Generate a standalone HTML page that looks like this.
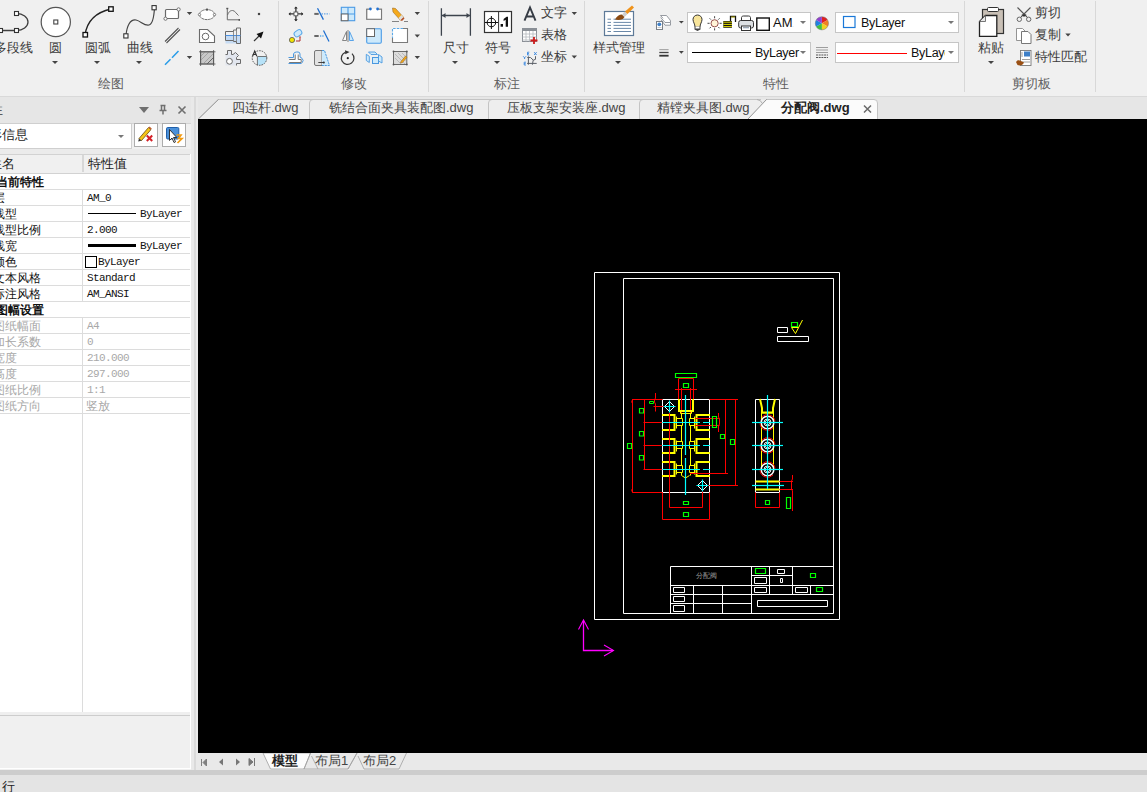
<!DOCTYPE html>
<html><head><meta charset="utf-8">
<style>
*{margin:0;padding:0;box-sizing:border-box}
html,body{width:1147px;height:792px;overflow:hidden;background:#f0f0f0;font-family:"Liberation Sans",sans-serif;}
.a{position:absolute}
.t{position:absolute;white-space:nowrap;font-size:13px;line-height:16px;color:#3b3b3b}
.g{position:absolute;white-space:nowrap;font-size:13px;line-height:16px;color:#5e5e5e}
.sep{position:absolute;top:1px;width:1px;height:91px;background:#d8d8d8}
.arr{position:absolute;width:0;height:0;border-left:3.5px solid transparent;border-right:3.5px solid transparent;border-top:3.5px solid #444}
.arrl{position:absolute;width:0;height:0;border-left:3px solid transparent;border-right:3px solid transparent;border-top:3.5px solid #777}
.box{position:absolute;background:#fff;border:1px solid #c6c6c6}
.row{position:absolute;left:0;width:190px;height:16px;border-bottom:1px solid #dcdcdc;background:#fff}
.pn{position:absolute;left:-7px;top:1px;font-size:12px;line-height:14px;color:#111;white-space:nowrap}
.pv{position:absolute;left:87px;top:1px;font-family:"Liberation Mono",monospace;font-size:11px;letter-spacing:-0.6px;line-height:14px;color:#111;white-space:nowrap}
.dis .pn,.dis .pv{color:#a8a8a8}
.cd{position:absolute;left:82px;top:0;width:1px;height:16px;background:#dcdcdc}
</style></head><body>
<!-- ribbon -->
<div class="a" style="left:0;top:0;width:1147px;height:96px;background:#f0f0f0"></div>
<div class="a" style="left:0;top:96px;width:1147px;height:1px;background:#d9d9d9"></div>
<div class="sep" style="left:278px"></div>
<div class="sep" style="left:428px"></div>
<div class="sep" style="left:584px"></div>
<div class="sep" style="left:964px"></div>
<div class="sep" style="left:1095px"></div>

<div class="box" style="left:687px;top:12px;width:124px;height:21px"></div>
<div class="box" style="left:687px;top:42px;width:124px;height:21px"></div>
<div class="box" style="left:835px;top:12px;width:124px;height:21px"></div>
<div class="box" style="left:835px;top:42px;width:124px;height:21px"></div>
<!-- icons --><svg class="a" style="left:0;top:0" width="1147" height="96"><path d="M0 30.5H16.5M16.5 13.5A11.5 8.5 0 0 1 16.5 30.5" stroke="#404040" stroke-width="1.3" fill="none"/><rect x="-1.5" y="28.5" width="4" height="4" fill="#fff" stroke="#333" stroke-width="1.1"/><rect x="14.5" y="28.5" width="4" height="4" fill="#fff" stroke="#333" stroke-width="1.1"/><rect x="14.5" y="11.5" width="4" height="4" fill="#fff" stroke="#333" stroke-width="1.1"/><circle cx="55.8" cy="22" r="14.6" fill="#fff" stroke="#555" stroke-width="1.2"/><rect x="53.8" y="20" width="4" height="4" fill="#fff" stroke="#444" stroke-width="1.1"/><path d="M85 35Q88 14 111 9" stroke="#222" stroke-width="1.3" fill="none"/><rect x="83" y="32.5" width="4.5" height="4.5" fill="#fff" stroke="#111" stroke-width="1.3"/><rect x="108.7" y="6.8" width="4.5" height="4.5" fill="#fff" stroke="#111" stroke-width="1.3"/><path d="M126 35C127 26 130 19 136 20C141 21 144 26 149 25C153 24 154 16 154.5 8" stroke="#444" stroke-width="1.2" fill="none"/><rect x="123.8" y="33.8" width="4.2" height="4.2" fill="#fff" stroke="#333" stroke-width="1.1"/><rect x="152" y="5.6" width="4.2" height="4.2" fill="#fff" stroke="#333" stroke-width="1.1"/><rect x="165.5" y="9.5" width="13" height="9" rx="1" fill="#fff" stroke="#6a6a6a" stroke-width="1.2"/><circle cx="165.5" cy="18.7" r="1.6" fill="#fff" stroke="#666" stroke-width="0.9"/><circle cx="178.6" cy="9.4" r="1.6" fill="#fff" stroke="#666" stroke-width="0.9"/><ellipse cx="207" cy="14.6" rx="7.6" ry="5" fill="#fff" stroke="#6a6a6a" stroke-width="1" stroke-dasharray="2.5 0.6"/><rect x="206" y="8.6" width="2" height="2" fill="#555"/><circle cx="199.5" cy="14.6" r="1.2" fill="#fff" stroke="#666" stroke-width="0.8"/><circle cx="214.5" cy="14.6" r="1.2" fill="#fff" stroke="#666" stroke-width="0.8"/><path d="M227.3 8.5V19.8H239.5M227.5 15C229 11 231 10.5 232.5 10.5C235 10.5 236.5 14 238.5 15.5" stroke="#6a6a6a" stroke-width="1" fill="none"/><rect x="226.3" y="7.8" width="2" height="1.4" fill="#555"/><rect x="238.5" y="19" width="1.5" height="1.8" fill="#555"/><rect x="257.9" y="12.9" width="2.2" height="2.2" fill="#444"/><path d="M186.8 12.0H192.2L189.5 15.0Z" fill="#444"/><path d="M186.8 56.0H192.2L189.5 59.0Z" fill="#444"/><path d="M414.6 12.0H420.0L417.3 15.0Z" fill="#444"/><path d="M414.6 34.5H420.0L417.3 37.5Z" fill="#444"/><path d="M414.6 56.0H420.0L417.3 59.0Z" fill="#444"/><path d="M571.5999999999999 12.0H577.0L574.3 15.0Z" fill="#444"/><path d="M571.5999999999999 55.5H577.0L574.3 58.5Z" fill="#444"/><path d="M1065.3 33.5H1070.7L1068 36.5Z" fill="#444"/><path d="M165 41.5L178.5 28M166.5 43L180 29.5" stroke="#555" stroke-width="1.1" fill="none"/><path d="M199.5 29.5H207.5L214.5 36V42.5H199.5Z" fill="#fff" stroke="#6a6a6a" stroke-width="1.1"/><circle cx="205.5" cy="36.5" r="3.3" fill="none" stroke="#6a6a6a" stroke-width="1"/><rect x="225.5" y="35.5" width="15" height="8" fill="#c5dbf4"/><path d="M225.5 31.5H233.5V30H236.5V28H240.5V43.5H236.5V41.5H233.5V40.5H225.5Z" fill="none" stroke="#6a6a6a" stroke-width="1"/><path d="M225.5 35.5H240.5" stroke="#4a90e2" stroke-width="1"/><path d="M236.5 30V41.5M233.5 30V40.5" stroke="#777" stroke-width="0.8"/><path d="M254 41L260 35" stroke="#333" stroke-width="1.2"/><path d="M263.5 31.5L256.5 34L261 38.5Z" fill="#111"/><path d="M165 64.8L170.5 59.2M172 57.8L178.5 51" stroke="#2a9de8" stroke-width="1.5"/><rect x="200.6" y="51.8" width="13" height="12.2" fill="#c8c8c8" stroke="#666" stroke-width="1"/><path d="M201 56L205 52M201 60L209 52M203 64L213 54M207 64L213 58" stroke="#999" stroke-width="0.8"/><path d="M199 51.8H215.5M199 64H215.5M200.6 50V66M213.6 50V66M207 64L214 57" stroke="#555" stroke-width="0.8"/><path d="M225.5 54.5H227.5V50.5H231.5V54.5H233L235.5 52.5L238.5 55.5L236.5 57.5V59.5H240.5V63.5H236.5V65.5H225.5Z" fill="#e2e6ee"/><path d="M225.5 54.5H227.5V50.5H231.5V54.5H233L235.5 52.5L238.5 55.5L236.5 57.5V59.5H240.5V63.5H236.5V65.5" fill="none" stroke="#6a6a6a" stroke-width="1"/><circle cx="229.5" cy="61.3" r="2.9" fill="#fff" stroke="#6a6a6a" stroke-width="1"/><clipPath id="cc"><circle cx="259.5" cy="58" r="7.3"/></clipPath><rect x="257.4" y="56.5" width="10" height="10" fill="#b7e2f8" clip-path="url(#cc)"/><circle cx="259.5" cy="58" r="7.3" fill="none" stroke="#444" stroke-width="0.9" stroke-dasharray="1.6 1"/><path d="M257.4 56.5H266.8M257.4 56.5V65.3" stroke="#555" stroke-width="0.8"/><path d="M252.6 56.3L254.7 51L256.8 56.3M253.4 54.5H256" stroke="#333" stroke-width="1.1" fill="none"/><path d="M295.9 7V21M289 13.9H303" stroke="#333" stroke-width="1.3"/><path d="M294 8.5L295.9 6.5L297.8 8.5ZM294 19.3L295.9 21.3L297.8 19.3ZM290.5 12L288.5 13.9L290.5 15.8ZM301.3 12L303.3 13.9L301.3 15.8Z" fill="#333"/><rect x="294" y="12" width="3.8" height="3.8" fill="#fff" stroke="#555" stroke-width="0.9"/><path d="M314.3 13.9H318.7" stroke="#666" stroke-width="2"/><path d="M321.5 13.9H329.5" stroke="#6aa8e8" stroke-width="1.4" stroke-dasharray="1.5 1"/><path d="M317.5 8.3L323.4 19.6" stroke="#1f6fd0" stroke-width="1.3"/><rect x="341.3" y="7.3" width="13.4" height="13.4" fill="#cde9fb" stroke="#4a9be6" stroke-width="1.1"/><path d="M348 7.3V20.7M341.3 14H354.7" stroke="#4a9be6" stroke-width="1.1"/><rect x="341.3" y="14" width="6.7" height="6.7" fill="#fff" stroke="#666" stroke-width="1"/><path d="M369.5 9.3H366.8V19.3H381.5V9.3H378.5" fill="#fff" stroke="#777" stroke-width="1.1"/><path d="M366.8 9.3V19.3H381.5V9.3" fill="#fff"/><rect x="367" y="9.5" width="14.3" height="9.6" fill="#fff"/><path d="M369.5 9.3H366.8V19.3H381.5V9.3H378.5" fill="none" stroke="#7a7a7a" stroke-width="1.1"/><circle cx="370.4" cy="9" r="1.4" fill="#1f6fd0"/><circle cx="377.6" cy="9" r="1.4" fill="#1f6fd0"/><path d="M392.5 8L393 12L400.5 20.3L403.5 17.2L395.5 8.5Z" fill="#f5a91a" stroke="#a06b20" stroke-width="0.6"/><path d="M398.5 18L401.5 15L403.5 17.2L400.5 20.3Z" fill="#e0e0e0"/><path d="M400.5 20.3L403.5 17.2L404.5 18.5L402 21Z" fill="#b5502a"/><path d="M392 21.5H399M404 21.5H408" stroke="#777" stroke-width="0.9"/><rect x="294" y="30.5" width="8" height="5.5" rx="2.5" transform="rotate(-35 298 33.3)" fill="#cde9fb" stroke="#5aa8e8" stroke-width="1"/><circle cx="292" cy="40" r="2.6" fill="#f2e400" stroke="#555" stroke-width="0.8"/><path d="M296 41H300V37.5" stroke="#b03030" stroke-width="1" fill="none"/><path d="M298.8 37.5L300 36L301.2 37.5Z" fill="#b03030"/><path d="M314.3 36H318.7" stroke="#666" stroke-width="2"/><path d="M320 36H324" stroke="#5aa8e8" stroke-width="1.4" stroke-dasharray="1.3 1"/><path d="M323.5 30.5L329 41.5" stroke="#1f6fd0" stroke-width="1.3"/><path d="M348 30V42" stroke="#aaa" stroke-width="1.6"/><path d="M346.5 31.5L342.5 40.5H346.5Z" fill="#fff" stroke="#777" stroke-width="0.9"/><path d="M349.5 31.5L353.5 40.5H349.5Z" fill="#cde9fb" stroke="#4a9be6" stroke-width="0.9"/><rect x="366.7" y="28.7" width="14.6" height="14.6" rx="1.2" fill="#cde9fb" stroke="#4a9be6" stroke-width="1.1"/><rect x="366.7" y="28.7" width="7.8" height="7.8" fill="#fff" stroke="#666" stroke-width="1"/><rect x="392.5" y="28.5" width="15" height="14" fill="#fff"/><path d="M392.5 38V42.5H407.5V28.5H403" fill="none" stroke="#7a7a7a" stroke-width="1.1"/><path d="M403 28.5H392.5V38" fill="none" stroke="#5aa8e8" stroke-width="1.1" stroke-dasharray="2.5 1.2"/><path d="M288.5 57.5H293.5V54Q294 52 296.5 52H298Q300 52 300 54V57L302 58.3Q304.2 60.5 302.2 62.6L301.3 63.5H288.5" fill="none" stroke="#4a98e0" stroke-width="1"/><path d="M289.2 59.5H295.2V54.5H298.2V59.5H301.2V62.5H289.2" fill="#fff" stroke="#fff" stroke-width="0.5"/><path d="M289.2 59.5H295.2V54.5M298.2 54.5V59.5H301.2V62.5M289.2 62.5H301.2" fill="none" stroke="#777" stroke-width="1"/><path d="M322 50.5H316Q314.5 50.5 314.5 52V64Q314.5 65.5 316 65.5H322Z" fill="#e2e2e2" stroke="#777" stroke-width="1"/><path d="M322 50.5H324.5L329.5 65.5H322Z" fill="#cdeafc"/><path d="M322 50.5H324.5L329.5 65.5H322" fill="none" stroke="#4a98e0" stroke-width="1" stroke-dasharray="2.2 0.8"/><path d="M318.3 62.5H323.5" stroke="#444" stroke-width="1"/><circle cx="323.8" cy="62.5" r="1.1" fill="#333"/><path d="M352 53.6A6.3 6.3 0 1 1 345.3 52.3" fill="none" stroke="#3a3a3a" stroke-width="1.3"/><path d="M345 50.2L349.6 52L345.3 54.2Z" fill="#333"/><circle cx="347.8" cy="58.2" r="1.1" fill="#222"/><path d="M368.5 52H375L377.5 54.5H371Z" fill="#cdeafc" stroke="#4a98e0" stroke-width="0.9"/><path d="M366.3 54.3L369.3 56.3V62.5L366.3 60.5Z" fill="#cdeafc" stroke="#4a98e0" stroke-width="0.9"/><rect x="372.5" y="57.5" width="6" height="6" fill="#cdeafc" stroke="#4a98e0" stroke-width="1"/><path d="M378.5 54.5L382 57V63L378.5 61Z" fill="#cdeafc" stroke="#4a98e0" stroke-width="0.9"/><rect x="393.5" y="51.5" width="13.3" height="13" fill="#dcdcdc" stroke="#6a6a6a" stroke-width="1"/><path d="M395 54L405 64M395 58L401 64M398 53L405.5 60.5M402 53L405.5 56.5" stroke="#b0b0b0" stroke-width="0.8"/><circle cx="393.5" cy="51.5" r="0.9" fill="#555"/><circle cx="406.8" cy="51.5" r="0.9" fill="#555"/><circle cx="393.5" cy="64.5" r="0.9" fill="#555"/><circle cx="406.8" cy="64.5" r="0.9" fill="#555"/><path d="M401 61.5L405.5 56L407 57.3L402.5 62.5L400.5 63Z" fill="#f5a91a" stroke="#8a5a10" stroke-width="0.5"/><path d="M441.4 8.2V35.7M470.4 8.2V35.7M442 15.5H470" stroke="#3d444d" stroke-width="1.3" fill="none"/><path d="M442 15.5L445.5 13V18ZM470 15.5L466.5 13V18Z" fill="#3d444d"/><rect x="484.5" y="11.5" width="27" height="21" fill="#fff" stroke="#333" stroke-width="1.2"/><path d="M498.6 11.5V32.5" stroke="#333" stroke-width="1"/><circle cx="491.4" cy="22.5" r="4.3" fill="none" stroke="#111" stroke-width="1"/><path d="M485 22.5H498M491.4 16V29" stroke="#111" stroke-width="1"/><rect x="500.6" y="24" width="2.4" height="2.7" fill="#111"/><path d="M503.6 18.9L506.6 16.8H508V26.7H505.7V19.7L503.6 20.9Z" fill="#111"/><path d="M524.5 20.7L530 7.5L535.5 20.7M526.3 16.5H533.7" stroke="#363c45" stroke-width="1.9" fill="none"/><rect x="522.5" y="28.5" width="14" height="13" fill="#fff" stroke="#8a8f96" stroke-width="1"/><rect x="522.5" y="28.5" width="14" height="2.5" fill="#8a8f96"/><path d="M522.5 34H536.5M522.5 37H536.5M522.5 40H536.5M526 31V41.5M529.5 31V41.5M533 31V41.5" stroke="#b5b9be" stroke-width="0.8"/><path d="M534 37V44M530.5 40.5H537.5" stroke="#cc1a1a" stroke-width="1.8"/><path d="M528.4 56.3V64.7M527.1 63.4H536.7M527.3 57.5H530.5L533.3 60.2L535.5 59.3V56.2M533.2 60.2L532.4 64.7" stroke="#5a5f66" stroke-width="1" fill="none"/><path d="M527.5 52.2H529.3M527.5 52.2V55M527.5 53.6H529M527.5 55H529.3" stroke="#3a88e0" stroke-width="0.9" fill="none"/><path d="M534.2 52.2L536.6 55M536.6 52.2L534.2 55" stroke="#3a88e0" stroke-width="1" fill="none"/><path d="M523.2 56.3L524.6 57.8L526 56.3M524.6 57.8V59" stroke="#3a88e0" stroke-width="1" fill="none"/><path d="M524.2 62.2H526M524.2 62.2V65M524.2 63.6H525.7M524.2 65H526" stroke="#3a88e0" stroke-width="0.9" fill="none"/><rect x="604.5" y="11.5" width="29" height="24" fill="#fff" stroke="#5e7a98" stroke-width="1.2"/><path d="M607.5 19.2H611M613.5 19.2H631" stroke="#6a88a8" stroke-width="1"/><path d="M607.5 22.4H611M613.5 22.4H631" stroke="#6a88a8" stroke-width="1"/><path d="M607.5 25.4H611M613.5 25.4H631" stroke="#6a88a8" stroke-width="1"/><path d="M607.5 28.4H611M613.5 28.4H631" stroke="#6a88a8" stroke-width="1"/><path d="M607.5 31.5H611M613.5 31.5H631" stroke="#6a88a8" stroke-width="1"/><path d="M615 19.5C617 16 619 14.5 622 14.5L624.5 17C623 19.5 619.5 20.5 615 19.5Z" fill="#8b4a12"/><path d="M622 14.5L625 11.5L627.5 14L624.5 17Z" fill="#cfcfcf"/><path d="M625 11.5L632 5.5L634 7.5L627.5 14Z" fill="#f0931b"/><path d="M660.5 15.5H666.5L670.5 20.5H665Z" fill="#fff" stroke="#8a8f96" stroke-width="0.9"/><path d="M660.8 17.5L665 22.5H670.5V20.5M661.3 20L665 25.2H670.5V22.5" fill="#fff" stroke="#8a8f96" stroke-width="0.9"/><rect x="656.5" y="21.5" width="6" height="8" fill="#fff" stroke="#7a8088" stroke-width="1"/><circle cx="659.3" cy="24.3" r="1.9" fill="#3f80c8"/><path d="M657.5 27.5H661.5" stroke="#bbb" stroke-width="0.8"/><path d="M681.5 20.8H684L681.5 23.6Z" fill="none"/><path d="M678.9 20.9H683.8L681.35 23.6Z" fill="#444"/><path d="M678.9 51H683.8L681.35 53.8Z" fill="#444"/><path d="M659.3 49.7H668.6" stroke="#999" stroke-width="1"/><path d="M659.3 52.5H668.6" stroke="#444" stroke-width="1.3"/><path d="M659.3 55.7H668.6" stroke="#333" stroke-width="1.8"/><path d="M694.5 27V29.5L697.5 31L700.5 29.5V27Z" fill="#444"/><path d="M695 27C695 24 693 22 693 19.5A4.5 4.5 0 0 1 702 19.5C702 22 700 24 700 27Z" fill="#f7e49a" stroke="#333" stroke-width="1"/><rect x="695.5" y="26.5" width="4" height="2" fill="#fff"/><circle cx="714.6" cy="23.3" r="3.6" fill="#fff4d8" stroke="#8a4040" stroke-width="0.9"/><path d="M714.6 16.2V18.3M714.6 28.3V30.4M707.5 23.3H709.6M719.6 23.3H721.7M709.6 18.3L710.9 19.6M718.3 27L719.6 28.3M719.6 18.3L718.3 19.6M710.9 27L709.6 28.3" stroke="#333" stroke-width="0.9"/><rect x="723.3" y="21" width="8.6" height="6.8" fill="#111"/><path d="M723.3 22.2H731.9M723.3 24.4H731.9M723.3 26.6H731.9" stroke="#e8e000" stroke-width="1"/><path d="M730.5 21V16.5H735.5V22" fill="none" stroke="#111" stroke-width="1.3"/><path d="M731 17H735" stroke="#d0c800" stroke-width="0.8"/><path d="M741.5 20V17.5C741.5 16.5 742.5 16 743.5 16H748.5C749.5 16 750.5 16.5 750.5 17.5V20" fill="#fff" stroke="#333" stroke-width="1"/><rect x="738.7" y="20.5" width="14.8" height="7.5" rx="2" fill="#dde0e3" stroke="#333" stroke-width="1"/><rect x="741.5" y="26" width="9" height="4.5" fill="#fff" stroke="#333" stroke-width="1"/><rect x="743" y="26.8" width="6" height="1.5" fill="#9aa7b5"/><rect x="756.8" y="18" width="12.5" height="12.3" fill="#fff" stroke="#111" stroke-width="1.4"/><path d="M821.9 23.3L821.90 16.70A6.6 6.6 0 0 1 827.62 20.00Z" fill="#e02020"/><path d="M821.9 23.3L827.62 20.00A6.6 6.6 0 0 1 827.62 26.60Z" fill="#f08020"/><path d="M821.9 23.3L827.62 26.60A6.6 6.6 0 0 1 821.90 29.90Z" fill="#f0d020"/><path d="M821.9 23.3L821.90 29.90A6.6 6.6 0 0 1 816.18 26.60Z" fill="#40c040"/><path d="M821.9 23.3L816.18 26.60A6.6 6.6 0 0 1 816.18 20.00Z" fill="#2080e0"/><path d="M821.9 23.3L816.18 20.00A6.6 6.6 0 0 1 821.90 16.70Z" fill="#9040d0"/><circle cx="821.9" cy="23.3" r="6.6" fill="none" stroke="#777" stroke-width="0.5"/><rect x="843.5" y="16.5" width="11.5" height="11" fill="#fff" stroke="#1a78d8" stroke-width="1.2"/><path d="M816 47.5H828M816 50H828M816 52.5H828" stroke="#888" stroke-width="0.8"/><path d="M816 55H828M816 57.5H828" stroke="#555" stroke-width="1" stroke-dasharray="2 0.7"/><rect x="982.5" y="9.5" width="21" height="24" fill="#c9c0b6" stroke="#333" stroke-width="1.2"/><rect x="987.5" y="7.5" width="11" height="4" rx="1" fill="#fff" stroke="#333" stroke-width="1"/><path d="M985.5 15.5H996.8V36.3H979.5V21.5Z" fill="#fff" stroke="#222" stroke-width="1.3"/><path d="M985.5 15.5V21.5H979.5Z" fill="#e8e8e8" stroke="#555" stroke-width="0.8"/><path d="M1017.5 7.5L1027 17M1030.5 7.5L1021 17" stroke="#555" stroke-width="1.1"/><path d="M1021.5 14.5L1026.5 14.5L1024 17Z" fill="#333"/><circle cx="1019.3" cy="19.3" r="2.2" fill="none" stroke="#666" stroke-width="1"/><circle cx="1028.7" cy="19.3" r="2.2" fill="none" stroke="#666" stroke-width="1"/><path d="M1016.5 28.5H1022.5L1025 31V40.5H1016.5Z" fill="#fff" stroke="#888" stroke-width="0.9"/><path d="M1021.5 31.5H1028L1031 34.5V43.5H1021.5Z" fill="#fff" stroke="#777" stroke-width="1"/><rect x="1020.5" y="50.5" width="10.5" height="15" fill="#fff" stroke="#777" stroke-width="0.9"/><rect x="1024" y="51.5" width="6" height="5" fill="#3d7fc8"/><path d="M1022 52V57M1022 59.5H1030M1022 62H1030" stroke="#777" stroke-width="0.7"/><path d="M1016 62C1017 60 1019 60 1021 61L1024 62.5C1023 65 1020 66 1017.5 65Z" fill="#9a5014"/></svg><!-- /icons -->
<div id="ribbontext">
<div class="t" style="left:-6px;top:40px">多段线</div>
<div class="t" style="left:49px;top:40px">圆</div>
<div class="t" style="left:85px;top:40px">圆弧</div>
<div class="t" style="left:127px;top:40px">曲线</div>
<div class="g" style="left:98px;top:76px">绘图</div>
<div class="g" style="left:341px;top:76px">修改</div>
<div class="t" style="left:443px;top:40px">尺寸</div>
<div class="t" style="left:485px;top:40px">符号</div>
<div class="t" style="left:541px;top:5px">文字</div>
<div class="t" style="left:541px;top:27px">表格</div>
<div class="t" style="left:541px;top:49px">坐标</div>
<div class="g" style="left:494px;top:76px">标注</div>
<div class="t" style="left:593px;top:40px">样式管理</div>
<div class="g" style="left:763px;top:76px">特性</div>
<div class="t" style="left:978px;top:40px">粘贴</div>
<div class="t" style="left:1035px;top:5px">剪切</div>
<div class="t" style="left:1035px;top:27px">复制</div>
<div class="t" style="left:1035px;top:49px">特性匹配</div>
<div class="g" style="left:1012px;top:76px">剪切板</div>
</div>
<div class="arr" style="left:52px;top:61px"></div>
<div class="arr" style="left:94px;top:61px"></div>
<div class="arr" style="left:136px;top:61px"></div>
<div class="arr" style="left:452px;top:61px"></div>
<div class="arr" style="left:494px;top:61px"></div>
<div class="arr" style="left:615px;top:61px"></div>
<div class="arr" style="left:988px;top:61px"></div>

<!-- property boxes -->
<div class="t" style="left:773px;top:15px;font-size:13px;color:#111">AM<span style="font-size:3px">.</span></div>
<div class="t" style="left:755px;top:45px;font-size:12.5px;color:#111;letter-spacing:-0.3px">ByLayer</div>
<div class="t" style="left:861px;top:15px;font-size:12.5px;color:#111;letter-spacing:-0.3px">ByLayer</div>
<div class="a" style="left:911px;top:45px;width:34px;height:17px;overflow:hidden"><div class="t" style="left:0;top:0;color:#111;font-size:12.5px;letter-spacing:-0.3px">ByLayer</div></div>
<div class="a" style="left:692px;top:52px;width:59px;height:1px;background:#000"></div>
<div class="a" style="left:837px;top:53px;width:70px;height:1px;background:#f00"></div>
<div class="arrl" style="left:800px;top:21px"></div>
<div class="arrl" style="left:800px;top:51px"></div>
<div class="arrl" style="left:948px;top:21px"></div>
<div class="arrl" style="left:948px;top:51px"></div>

<!-- file tab strip -->
<div class="a" style="left:0;top:97px;width:1147px;height:22px;background:#e6e6e6"></div>


<!-- file tabs -->
<svg class="a" style="left:190px;top:97px" width="957" height="22">
 <path d="M8 22 L28 2.5 L1 2.5" fill="none"/>
 <path d="M8 22 L28 2.5 L575 2.5 L558 22 Z" fill="#eeeeee"/>
 <path d="M8 22 L28 2.5 L571 2.5" fill="none" stroke="#c4c4c4" stroke-width="1"/>
 <path d="M28.5 2.5 L8.5 22" stroke="#9a9a9a" stroke-width="0.9" fill="none"/>
 <path d="M119.5 22 L119.5 6 Q119.5 2.5 123 2.5" stroke="#c4c4c4" fill="none"/>
 <path d="M298.5 22 L298.5 6 Q298.5 2.5 302 2.5" stroke="#c4c4c4" fill="none"/>
 <path d="M449.5 22 L449.5 6 Q449.5 2.5 453 2.5" stroke="#c4c4c4" fill="none"/>
 <path d="M567 2.5 Q571 3 572 6" stroke="#b0b0b0" fill="none"/>
 <path d="M558 22 L576 2.5 L684 2.5 Q687.5 2.5 687.5 6 L687.5 22 Z" fill="#fbfbfb"/>
 <path d="M576 2.5 L684 2.5 Q687.5 2.5 687.5 6 L687.5 22" stroke="#c4c4c4" fill="none"/>
 <path d="M576.5 2.5 L558 22" stroke="#8a8a8a" stroke-width="0.9" fill="none"/>
 <path d="M674 8.5 L681 15.5 M681 8.5 L674 15.5" stroke="#6a6a6a" stroke-width="1.5"/>
</svg>
<div class="t" style="left:232px;top:100px;font-size:13px;color:#444">四连杆.dwg</div>
<div class="t" style="left:329px;top:100px;font-size:13px;color:#444">铣结合面夹具装配图.dwg</div>
<div class="t" style="left:507px;top:100px;font-size:13px;color:#444">压板支架安装座.dwg</div>
<div class="t" style="left:657px;top:100px;font-size:13px;color:#444">精镗夹具图.dwg</div>
<div class="t" style="left:781px;top:100px;font-size:13px;color:#222;font-weight:bold">分配阀.dwg</div>

<!-- left panel -->
<div class="a" style="left:0;top:97px;width:191px;height:673px;background:#f0f0f0"></div>
<div class="a" style="left:0;top:97px;width:194px;height:26px;background:#e6e6e6"></div>
<div class="a" style="left:191px;top:97px;width:7px;height:673px;background:#e9e9e9"></div>
<div class="a" style="left:194px;top:97px;width:2px;height:673px;background:#dadada"></div>


<!-- panel content -->
<div class="t" style="left:-23px;top:102px;font-size:13px">特性</div>
<div class="arrl" style="left:139px;top:107px;border-left-width:5px;border-right-width:5px;border-top-width:6px;border-top-color:#6f6f6f"></div>
<svg class="a" style="left:158px;top:104px" width="10" height="11"><path d="M2.5 1.5h5M3.5 1.5v5M6.5 1.5v5M1.5 6.5h7M5 6.5v4" stroke="#6f6f6f" stroke-width="1.5" fill="none"/></svg>
<svg class="a" style="left:177px;top:105px" width="10" height="10"><path d="M1.5 1.5L8.5 8.5M8.5 1.5L1.5 8.5" stroke="#6f6f6f" stroke-width="1.6" fill="none"/></svg>
<div class="a" style="left:0;top:123px;width:191px;height:1px;background:#d4d4d4"></div>
<div class="a" style="left:-2px;top:123px;width:134px;height:26px;background:#fff;border:1px solid #cfcfcf"></div>
<div class="t" style="left:-11px;top:127px;font-size:13px;color:#222">形信息</div>
<div class="arrl" style="left:118px;top:135px"></div>
<div class="a" style="left:134px;top:123px;width:24px;height:24px;background:#fff;border:1px solid #adadad"></div>
<div class="a" style="left:162px;top:123px;width:24px;height:24px;background:#fff;border:1px solid #adadad"></div>
<svg class="a" style="left:134px;top:123px" width="52" height="24">
 <path d="M5 15.5 L14.5 4.5 L16.8 6.8 L7.3 17.8 Z" fill="#f5c518" stroke="#6a4a10" stroke-width="0.8"/>
 <path d="M14.5 4.5 L15.6 3.4 L17.9 5.7 L16.8 6.8 Z" fill="#c06030"/>
 <path d="M5 15.5 L7.3 17.8 L4.2 18.6 Z" fill="#333"/>
 <path d="M12.8 12.5L18.2 18M18.2 12.5L12.8 18" stroke="#d42027" stroke-width="2"/>
 <rect x="32.5" y="4.5" width="12.3" height="11.5" rx="1.2" fill="#4a90d9" stroke="#1f5faa" stroke-width="1"/>
 <path d="M35.5 6.5 L35.5 17.5 L38 15 L40 19.5 L41.5 18.8 L39.5 14.5 L42.8 14.5 Z" fill="#fff" stroke="#222" stroke-width="0.9"/>
 <path d="M42.5 12 L47 12 L44.5 15.5 L48 15.5 L43.5 20" stroke="#f29a10" stroke-width="1.7" fill="none"/>
</svg>
<!-- grid -->
<div class="a" style="left:0;top:149px;width:191px;height:5px;background:#ebebeb"></div>
<div class="a" style="left:0;top:154px;width:190px;height:20px;background:#f0f0f0;border-top:1px solid #d2d2d2;border-bottom:1px solid #d2d2d2"></div>
<div class="a" style="left:82px;top:155px;width:2px;height:17px;background:#d7d7d7"></div>
<div class="t" style="left:-11px;top:156px;font-size:13px;color:#222">性名</div>
<div class="t" style="left:88px;top:156px;font-size:13px;color:#222">特性值</div>
<div class="row" style="top:174px"><div class="pn" style="font-weight:bold;left:-4px">当前特性</div></div>
<div class="row " style="top:190px"><div class="pn">层</div><div class="cd"></div><div class="pv">AM_0</div></div>
<div class="row " style="top:206px"><div class="pn">线型</div><div class="cd"></div><div class="a" style="left:88px;top:7px;width:48px;height:1px;background:#000"></div><div class="pv" style="left:140px">ByLayer</div></div>
<div class="row " style="top:222px"><div class="pn">线型比例</div><div class="cd"></div><div class="pv">2.000</div></div>
<div class="row " style="top:238px"><div class="pn">线宽</div><div class="cd"></div><div class="a" style="left:88px;top:6px;width:48px;height:3px;background:#000"></div><div class="pv" style="left:140px">ByLayer</div></div>
<div class="row " style="top:254px"><div class="pn">颜色</div><div class="cd"></div><div class="a" style="left:85px;top:2px;width:12px;height:12px;border:1px solid #000;background:#fff"></div><div class="pv" style="left:98px">ByLayer</div></div>
<div class="row " style="top:270px"><div class="pn">文本风格</div><div class="cd"></div><div class="pv">Standard</div></div>
<div class="row " style="top:286px"><div class="pn">标注风格</div><div class="cd"></div><div class="pv">AM_ANSI</div></div>
<div class="row" style="top:302px"><div class="pn" style="font-weight:bold;left:-4px">图幅设置</div></div>
<div class="row dis" style="top:318px"><div class="pn">图纸幅面</div><div class="cd"></div><div class="pv">A4</div></div>
<div class="row dis" style="top:334px"><div class="pn">加长系数</div><div class="cd"></div><div class="pv">0</div></div>
<div class="row dis" style="top:350px"><div class="pn">宽度</div><div class="cd"></div><div class="pv">210.000</div></div>
<div class="row dis" style="top:366px"><div class="pn">高度</div><div class="cd"></div><div class="pv">297.000</div></div>
<div class="row dis" style="top:382px"><div class="pn">图纸比例</div><div class="cd"></div><div class="pv">1:1</div></div>
<div class="row dis" style="top:398px"><div class="pn">图纸方向</div><div class="cd"></div><div class="pn" style="left:86px">竖放</div></div>
<div class="a" style="left:0;top:414px;width:190px;height:298px;background:#fff"></div>
<div class="a" style="left:82px;top:414px;width:1px;height:298px;background:#dcdcdc"></div>
<div class="a" style="left:190px;top:154px;width:1px;height:615px;background:#fff"></div>
<div class="a" style="left:0;top:712px;width:190px;height:4px;background:#efefef"></div>
<div class="a" style="left:0;top:715px;width:190px;height:1px;background:#cdcdcd"></div>
<div class="a" style="left:0;top:768px;width:191px;height:1px;background:#fff"></div>

<!-- canvas -->
<div class="a" style="left:198px;top:119px;width:949px;height:634px;background:#000"></div>

<!-- drawing --><svg class="a" style="left:198px;top:119px" width="949" height="634"><g transform="translate(-198,-119)" shape-rendering="auto"><path d="M594.5 272.5H839.5V619.5H594.5Z" stroke="#ffffff" stroke-width="1" fill="none" /><path d="M623.5 278.5H833.5V613.5H623.5Z" stroke="#ffffff" stroke-width="1" fill="none" /><path d="M670.5 566.5H833.5M670.5 566.5V613.5M670.5 585.5H833.5M670.5 594.5H833.5M670.5 603.5H751.5M751.5 575.5H792.5M693.5 585.5V613.5M722.5 585.5V613.5M751.5 566.5V613.5M769.5 566.5V594.5M792.5 566.5V594.5M810.5 585.5V594.5" stroke="#ffffff" stroke-width="1" fill="none" /><path d="M673.5 587.5H684.5V592.5H673.5Z" stroke="#ffffff" stroke-width="1" fill="none" /><path d="M673.5 596.5H684.5V601.5H673.5Z" stroke="#ffffff" stroke-width="1" fill="none" /><path d="M673.5 605.5H684.5V611.5H673.5Z" stroke="#ffffff" stroke-width="1" fill="none" /><path d="M754.5 577.5H766.5V583.5H754.5Z" stroke="#ffffff" stroke-width="1" fill="none" /><path d="M754.5 587.5H766.5V592.5H754.5Z" stroke="#ffffff" stroke-width="1" fill="none" /><path d="M777.5 569.5H784.5V573.5H777.5Z" stroke="#ffffff" stroke-width="1" fill="none" /><path d="M780.5 578.5H782.5V582.5H780.5Z" stroke="#ffffff" stroke-width="1" fill="none" /><path d="M795.5 587.5H807.5V592.5H795.5Z" stroke="#ffffff" stroke-width="1" fill="none" /><path d="M757.5 600.5H827.5V606.5H757.5Z" stroke="#ffffff" stroke-width="1" fill="none" /><path d="M755.5 568.5H765.5V573.5H755.5Z" stroke="#00ff00" stroke-width="1.2" fill="none" /><path d="M810.5 573.5H815.5V577.5H810.5Z" stroke="#00ff00" stroke-width="1.2" fill="none" /><path d="M816.5 587.5H822.5V591.5H816.5Z" stroke="#00ff00" stroke-width="1.2" fill="none" /><path d="M777.5 327.5H787.5V332.5H777.5Z" stroke="#ffffff" stroke-width="1" fill="none" /><path d="M777.5 336.5H808.5V341.5H777.5Z" stroke="#ffffff" stroke-width="1" fill="none" /><path d="M791.5 322.5H797.5V326.5H791.5Z" stroke="#00ff00" stroke-width="1.2" fill="none" /><path d="M791.5 327.5H798.5M791.5 327.5L795.5 333.5L802.5 320" stroke="#ffff00" stroke-width="1" fill="none" /><path d="M662.5 399.5H709.5V492.5H662.5Z" stroke="#ffffff" stroke-width="1" fill="none" /><path d="M675.5 373.5H696.5V377.5H675.5Z" stroke="#00ff00" stroke-width="1.2" fill="none" /><path d="M678.5 399.5V378.5H693.5V399.5M675 389.5H697M681.5 388V413M690.5 388V413" stroke="#ff0000" stroke-width="1" fill="none" /><path d="M683.5 383.5H688.5V387.5H683.5Z" stroke="#00ff00" stroke-width="1.2" fill="none" /><path d="M679 399V411H693V399" stroke="#ffff00" stroke-width="2" fill="none" /><path d="M680.5 411V413.5H691.5V411" stroke="#ffff00" stroke-width="1" fill="none" /><path d="M662 415H674.5V430H662" stroke="#ffff00" stroke-width="2" fill="none" /><path d="M676.5 416.5V428.5" stroke="#ffff00" stroke-width="1" fill="none" /><path d="M676.5 418.5H682.5V425.5H676.5" stroke="#ffff00" stroke-width="1" fill="none" /><path d="M710 415H696.5V430H710" stroke="#ffff00" stroke-width="2" fill="none" /><path d="M694.5 416.5V428.5" stroke="#ffff00" stroke-width="1" fill="none" /><path d="M694.5 418.5H689.5V425.5H694.5" stroke="#ffff00" stroke-width="1" fill="none" /><path d="M662 439H674.5V453H662" stroke="#ffff00" stroke-width="2" fill="none" /><path d="M676.5 440.5V451.5" stroke="#ffff00" stroke-width="1" fill="none" /><path d="M676.5 441.5H682.5V448.5H676.5" stroke="#ffff00" stroke-width="1" fill="none" /><path d="M710 439H696.5V453H710" stroke="#ffff00" stroke-width="2" fill="none" /><path d="M694.5 440.5V451.5" stroke="#ffff00" stroke-width="1" fill="none" /><path d="M694.5 441.5H689.5V448.5H694.5" stroke="#ffff00" stroke-width="1" fill="none" /><path d="M662 462H674.5V476H662" stroke="#ffff00" stroke-width="2" fill="none" /><path d="M676.5 463.5V474.5" stroke="#ffff00" stroke-width="1" fill="none" /><path d="M676.5 465.5H682.5V472.5H676.5" stroke="#ffff00" stroke-width="1" fill="none" /><path d="M710 462H696.5V476H710" stroke="#ffff00" stroke-width="2" fill="none" /><path d="M694.5 463.5V474.5" stroke="#ffff00" stroke-width="1" fill="none" /><path d="M694.5 465.5H689.5V472.5H694.5" stroke="#ffff00" stroke-width="1" fill="none" /><path d="M681.5 413.5V418.5M681.5 425.5V441.5M681.5 448.5V465.5M681.5 472.5V475.5L685.5 478L689.5 475.5M690.5 413.5V418.5M690.5 425.5V441.5M690.5 448.5V465.5M690.5 472.5V475.5" stroke="#ffff00" stroke-width="1" fill="none" /><path d="M632 399.5H662.5M632.5 399.5V492.5H662.5M644.5 399.5V469.5" stroke="#ff0000" stroke-width="1" fill="none" /><path d="M631.5 402.5L632.5 399.5M631.5 489.5L632.5 492.5" stroke="#ff0000" stroke-width="1" fill="none" /><path d="M643.5 422.5H662" stroke="#ff0000" stroke-width="1" fill="none" /><path d="M643.5 445.5H662" stroke="#ff0000" stroke-width="1" fill="none" /><path d="M643.5 469.5H662" stroke="#ff0000" stroke-width="1" fill="none" /><path d="M627.5 443.5H631.5V448.5H627.5Z" stroke="#00ff00" stroke-width="1.2" fill="none" /><path d="M639.5 408.5H643.5V413.0H639.5Z" stroke="#00ff00" stroke-width="1.2" fill="none" /><path d="M639.5 431.5H643.5V436.0H639.5Z" stroke="#00ff00" stroke-width="1.2" fill="none" /><path d="M639.5 455.5H643.5V460.0H639.5Z" stroke="#00ff00" stroke-width="1.2" fill="none" /><path d="M669 406.5H653.5M655.5 393V398L654.5 400V402L655.5 404V411.5" stroke="#ff0000" stroke-width="1" fill="none" /><path d="M649.5 401.5H653.5V403.5H649.5Z" stroke="#00ff00" stroke-width="1" fill="none" /><path d="M669.5 413V507.5H702.5V485.5" stroke="#ff0000" stroke-width="1" fill="none" /><path d="M702.5 485.5H738M735.5 399.5V485.5M709.5 399.5H738M725.5 399.5V473.5M690 473.5H728" stroke="#ff0000" stroke-width="1" fill="none" /><path d="M683.5 501.5H688.5V504.5H683.5Z" stroke="#00ff00" stroke-width="1.2" fill="none" /><path d="M662.5 492.5V519.5H709.5V492.5" stroke="#ff0000" stroke-width="1" fill="none" /><path d="M683.5 512.5H688.5V516.5H683.5Z" stroke="#00ff00" stroke-width="1.2" fill="none" /><path d="M695 418.5H719.5M695 425.5H719.5M718.5 413V417L719.5 419V424L718.5 426V432" stroke="#ff0000" stroke-width="1" fill="none" /><path d="M712.5 416.5H716.5V427.5H712.5Z" stroke="#00ff00" stroke-width="1.2" fill="none" /><path d="M720.5 434.5H724.5V438.5H720.5Z" stroke="#00ff00" stroke-width="1.2" fill="none" /><path d="M730.5 439.5H734.5V444.5H730.5Z" stroke="#00ff00" stroke-width="1.2" fill="none" /><path d="M685.5 395V455M685.5 458V495" stroke="#00ffff" stroke-width="1.2" fill="none" /><path d="M662 422.5H700M703 422.5H710" stroke="#00ffff" stroke-width="1.2" fill="none" /><path d="M662 445.5H700M703 445.5H710" stroke="#00ffff" stroke-width="1.2" fill="none" /><path d="M662 469.5H700M703 469.5H710" stroke="#00ffff" stroke-width="1.2" fill="none" /><path d="M669.5 401.5L674.5 406.5L669.5 411.5L664.5 406.5Z" stroke="#ffffff" stroke-width="1" fill="none" /><path d="M663.5 406.5H675.5M669.5 400.5V412.5" stroke="#00ffff" stroke-width="1.2" fill="none" /><path d="M702.5 480.5L707.5 485.5L702.5 490.5L697.5 485.5Z" stroke="#ffffff" stroke-width="1" fill="none" /><path d="M696.5 485.5H708.5M702.5 479.5V491.5" stroke="#00ffff" stroke-width="1.2" fill="none" /><path d="M755.5 399.5H779.5V492.5H755.5Z" stroke="#ffffff" stroke-width="1" fill="none" /><path d="M760 399L762 408V412.5H773V408L775 399" stroke="#ffff00" stroke-width="2" fill="none" /><path d="M762 413H773" stroke="#ffff00" stroke-width="1" fill="none" /><path d="M761.5 413V470M773.5 413V470" stroke="#ffff00" stroke-width="1" fill="none" /><circle cx="767.5" cy="422.5" r="6.3" fill="#000" stroke="#ffffff" stroke-width="1.6"/><path d="M762 417.0A7.6 7.6 0 0 1 775 421.5M773 428.0A7.6 7.6 0 0 1 760 423.5" stroke="#ff0000" stroke-width="1" fill="none" /><circle cx="767.5" cy="422.5" r="3.5" stroke="#ffffff" stroke-width="1" fill="none" /><path d="M767.5 419.5L770.5 422.5L767.5 425.5L764.5 422.5Z" stroke="#ffffff" stroke-width="0.8" fill="none" /><circle cx="767.5" cy="445.5" r="6.3" fill="#000" stroke="#ffffff" stroke-width="1.6"/><path d="M762 440.0A7.6 7.6 0 0 1 775 444.5M773 451.0A7.6 7.6 0 0 1 760 446.5" stroke="#ff0000" stroke-width="1" fill="none" /><circle cx="767.5" cy="445.5" r="3.5" stroke="#ffffff" stroke-width="1" fill="none" /><path d="M767.5 442.5L770.5 445.5L767.5 448.5L764.5 445.5Z" stroke="#ffffff" stroke-width="0.8" fill="none" /><circle cx="767.5" cy="469.5" r="6.3" fill="#000" stroke="#ffffff" stroke-width="1.6"/><path d="M762 464.0A7.6 7.6 0 0 1 775 468.5M773 475.0A7.6 7.6 0 0 1 760 470.5" stroke="#ff0000" stroke-width="1" fill="none" /><circle cx="767.5" cy="469.5" r="3.5" stroke="#ffffff" stroke-width="1" fill="none" /><path d="M767.5 466.5L770.5 469.5L767.5 472.5L764.5 469.5Z" stroke="#ffffff" stroke-width="0.8" fill="none" /><path d="M755.5 481.5H779.5M755.5 489.5H779.5" stroke="#ffff00" stroke-width="2" fill="none" /><path d="M767.5 395V489" stroke="#00ffff" stroke-width="1.2" fill="none" /><path d="M752 422.5H783" stroke="#00ffff" stroke-width="1.2" fill="none" /><path d="M752 445.5H783" stroke="#00ffff" stroke-width="1.2" fill="none" /><path d="M752 469.5H783" stroke="#00ffff" stroke-width="1.2" fill="none" /><path d="M752 485.5H784" stroke="#00ffff" stroke-width="1.2" fill="none" /><path d="M755.5 492.5V507.5H779.5V492.5" stroke="#ff0000" stroke-width="1" fill="none" /><path d="M765.5 500.5H769.5V504.5H765.5Z" stroke="#00ff00" stroke-width="1.2" fill="none" /><path d="M779.5 481.5H793M779.5 489.5H793M792.5 475V479L791.5 481V489L792.5 491V511" stroke="#ff0000" stroke-width="1" fill="none" /><path d="M786.5 497.5H790.5V508.5H786.5Z" stroke="#00ff00" stroke-width="1.2" fill="none" /><path d="M583.5 621V650.5H613" stroke="#ff00ff" stroke-width="1.3" fill="none" /><path d="M578.5 629.5L583.5 620L588.5 629.5M604 645L613.5 650.5L604 656" stroke="#ff00ff" stroke-width="1.1" fill="none" /><text x="706" y="577.5" font-size="6.5" fill="#9a9a9a" text-anchor="middle" font-family="Liberation Sans,sans-serif">分配阀</text></g></svg><!-- /drawing -->
<!-- layout tabs -->
<div class="a" style="left:198px;top:753px;width:949px;height:17px;background:#e9e9e9"></div>
<div class="a" style="left:0;top:770px;width:1147px;height:5px;background:#cdcdcd"></div>
<div class="a" style="left:0;top:775px;width:1147px;height:17px;background:#e4e4e4"></div>

<!-- layout tabs -->
<svg class="a" style="left:198px;top:753px" width="260" height="17">
 <path d="M3.5 6v7M5 9.5L8.5 6V13Z" stroke="#808080" fill="#808080" stroke-width="1"/>
 <path d="M25 5.5V12.5L21 9Z" fill="#777"/>
 <path d="M38 5.5V12.5L42 9Z" fill="#777"/>
 <path d="M51 5.5V12.5L55 9ZM56.5 5v8" stroke="#777" fill="#777" stroke-width="1"/>
 <path d="M65 0 L72.5 16 L106 16 L112.5 0 Z" fill="#fcfcfc" stroke="#a0a0a0" stroke-width="0.8"/>
 <path d="M112.5 0 L106 16 L150 16 L159 0" fill="none" stroke="#a0a0a0" stroke-width="0.8"/>
 <path d="M113.5 3 L120 16" fill="none" stroke="#a0a0a0" stroke-width="0.8"/>
 <path d="M159 0 L150 16 M160 3 L166 16 L201 16 L208.5 0" fill="none" stroke="#a0a0a0" stroke-width="0.8"/>
</svg>
<div class="t" style="left:272px;top:753px;font-size:13px;color:#222;font-weight:bold">模型</div>
<div class="t" style="left:315px;top:753px;font-size:13px;color:#444">布局1</div>
<div class="t" style="left:363px;top:753px;font-size:13px;color:#444">布局2</div>
<div class="t" style="left:2px;top:779px;font-size:13px;color:#222">行</div>

</body></html>
